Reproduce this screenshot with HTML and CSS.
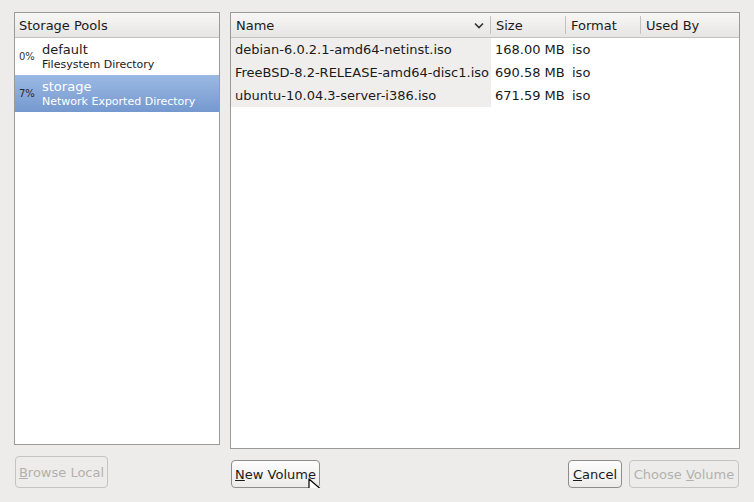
FILE: index.html
```html
<!DOCTYPE html>
<html lang="en">
<head>
    <meta charset="UTF-8">
    <title>Choose Storage Volume</title>
    <link rel="stylesheet" href="styles.css">
</head>
<body>
    <div class="dialog">
        <!-- 左侧：存储池 -->
        <div class="side">
            <div class="panel pools">
                <div class="head"><span class="head-cell">Storage Pools</span></div>
                <div class="pool">
                    <span class="pct">0%</span>
                    <div class="pool-text">
                        <div class="pool-name">default</div>
                        <div class="pool-type">Filesystem Directory</div>
                    </div>
                </div>
                <div class="pool selected">
                    <span class="pct">7%</span>
                    <div class="pool-text">
                        <div class="pool-name">storage</div>
                        <div class="pool-type">Network Exported Directory</div>
                    </div>
                </div>
            </div>
            <div class="side-buttons">
                <button class="btn disabled browse"><u>B</u>rowse Local</button>
            </div>
        </div>

        <!-- 右侧：卷列表 -->
        <div class="main">
            <div class="panel volumes">
                <div class="head cols">
                    <span class="head-cell c-name">Name
                        <svg class="sort" width="10" height="7" viewBox="0 0 10 7"><path d="M1 1.5 L5 5.5 L9 1.5" fill="none" stroke="#333" stroke-width="1.6"/></svg>
                    </span>
                    <span class="head-cell c-size">Size</span>
                    <span class="head-cell c-format">Format</span>
                    <span class="head-cell c-used">Used By</span>
                </div>
                <div class="row cols">
                    <span class="cell c-name">debian-6.0.2.1-amd64-netinst.iso</span>
                    <span class="cell c-size">168.00 MB</span>
                    <span class="cell c-format">iso</span>
                    <span class="cell c-used"></span>
                </div>
                <div class="row cols">
                    <span class="cell c-name">FreeBSD-8.2-RELEASE-amd64-disc1.iso</span>
                    <span class="cell c-size">690.58 MB</span>
                    <span class="cell c-format">iso</span>
                    <span class="cell c-used"></span>
                </div>
                <div class="row cols">
                    <span class="cell c-name">ubuntu-10.04.3-server-i386.iso</span>
                    <span class="cell c-size">671.59 MB</span>
                    <span class="cell c-format">iso</span>
                    <span class="cell c-used"></span>
                </div>
            </div>
            <div class="main-buttons">
                <button class="btn new"><u>N</u>ew Volume
                    <svg class="cursor" width="14" height="20" viewBox="0 0 14 20"><path d="M1 1 L1 15 L4.5 11.5 L7 17.5 L9.5 16.5 L7 10.5 L12 10.5 Z" fill="#fff" stroke="#000" stroke-width="1.2" stroke-linejoin="round"/></svg>
                </button>
                <span class="spacer"></span>
                <button class="btn cancel"><u>C</u>ancel</button>
                <button class="btn disabled choose">Choose <u>V</u>olume</button>
            </div>
        </div>
    </div>
</body>
</html>
```

FILE: styles.css
```css
/* 对话框样式 */
body {
    margin: 0;
    background-color: #edeceb;
    font-family: "DejaVu Sans", sans-serif;
    font-size: 13px;
    color: #1a1a1a;
}

.dialog {
    display: flex;
    padding: 12px 14px 0 14px;
    gap: 10px;
}

.side {
    width: 206px;
    display: flex;
    flex-direction: column;
}

.main {
    width: 510px;
    display: flex;
    flex-direction: column;
}

.panel {
    background-color: #fff;
    border: 1px solid #9c9a98;
    box-sizing: border-box;
}

.pools {
    height: 433px;
}

.volumes {
    height: 437px;
}

.head {
    height: 24px;
    display: flex;
    background: linear-gradient(#f7f7f6, #e6e5e4);
    border-bottom: 1px solid #c4c2bf;
}

.head-cell {
    display: flex;
    align-items: center;
    padding-left: 4px;
    color: #1a1a1a;
}

.pool {
    height: 37px;
    display: flex;
    align-items: center;
}

.pct {
    width: 27px;
    padding-left: 4px;
    box-sizing: border-box;
    font-size: 10px;
    color: #333;
}

.pool-name {
    font-size: 13px;
    line-height: 15px;
}

.pool-type {
    font-size: 11px;
    line-height: 15px;
}

.pool.selected {
    background: linear-gradient(#9bb9e3, #7599cf);
    color: #fff;
}

.pool.selected .pct {
    color: #2a2a2a;
}

.cols {
    display: flex;
}

.c-name {
    width: 260px;
}

.c-size {
    width: 75px;
}

.c-format {
    width: 75px;
}

.c-used {
    flex: 1;
}

.head .c-name,
.head .c-size,
.head .c-format {
    border-right: 1px solid #c4c2bf;
    margin: 3px 0;
    box-sizing: border-box;
}

.head .c-name {
    padding-left: 5px;
    padding-right: 6px;
    justify-content: space-between;
}

.head .c-size,
.head .c-format,
.head .c-used {
    padding-left: 5px;
}

.row {
    height: 23px;
    align-items: center;
}

.cell {
    height: 23px;
    line-height: 23px;
    box-sizing: border-box;
    white-space: nowrap;
}

.row .c-name {
    background-color: #efeeed;
    padding-left: 4px;
}

.row .c-size {
    padding-left: 4px;
}

.row .c-format {
    padding-left: 6px;
}

/* 按钮 */
.side-buttons {
    padding-top: 11px;
    padding-left: 1px;
}

.main-buttons {
    display: flex;
    gap: 7px;
    padding-top: 11px;
    padding-left: 1px;
}

.spacer {
    flex: 1;
}

.btn {
    position: relative;
    height: 28px;
    padding: 0;
    white-space: nowrap;
    font-family: "DejaVu Sans", sans-serif;
    font-size: 13px;
    color: #1a1a1a;
    background: linear-gradient(#fdfdfd, #ecebea);
    border: 1px solid #8f8d8b;
    border-radius: 4px;
}

.btn.disabled {
    color: #b3b1ae;
    background: #edeceb;
    border-color: #c6c4c1;
}

.browse {
    height: 32px;
    width: 93px;
}

.new {
    width: 89px;
}

.cancel {
    width: 54px;
}

.choose {
    width: 110px;
    margin-right: 1px;
}

.cursor {
    position: absolute;
    left: 76px;
    top: 17px;
}
```
